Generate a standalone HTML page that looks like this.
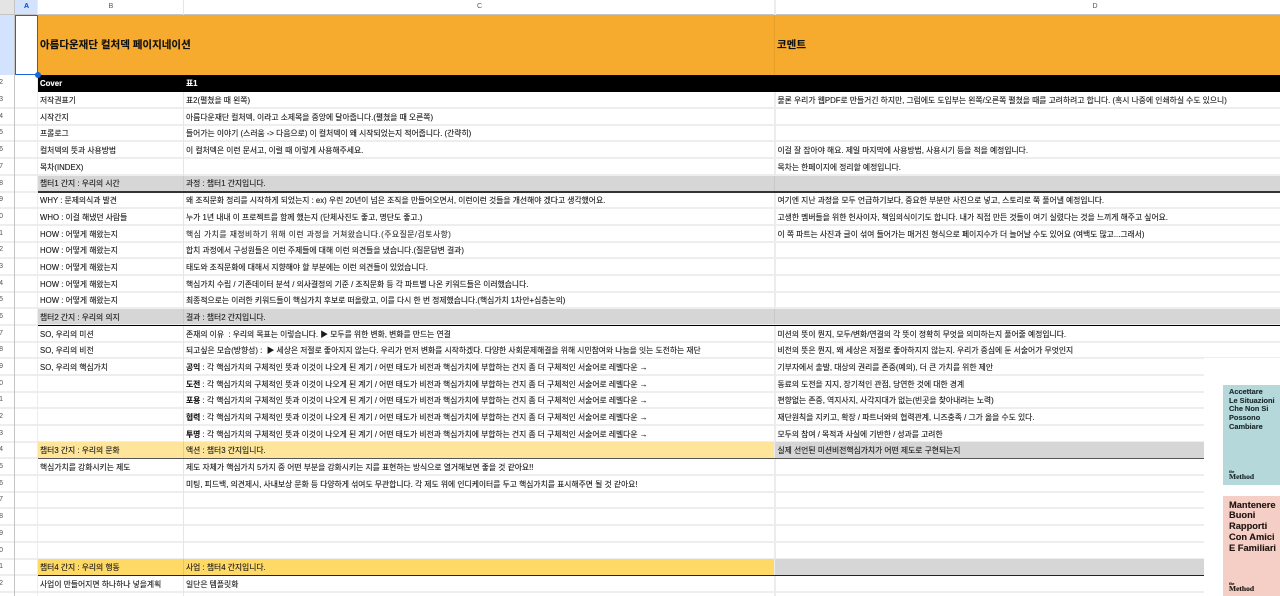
<!DOCTYPE html>
<html lang="ko"><head><meta charset="utf-8"><title>Sheet</title>
<style>
html,body{margin:0;padding:0;background:#fff}
#p{position:relative;width:1280px;height:596px;overflow:hidden;background:#fff;font:7.8px/16px "Liberation Sans","Noto Sans CJK KR",sans-serif;color:#1a1a1a}
.r{position:absolute;left:0;width:1280px;height:17px;box-shadow:inset 0 -2px 0 #eeeeee}
.c{position:absolute;top:0;height:16px;line-height:17px;white-space:nowrap;-webkit-text-stroke:.12px currentColor}
.n{position:absolute;left:0;top:0;width:3px;height:16px;overflow:hidden;direction:rtl;color:#555;font-size:7px}
.b{left:40px}.m{left:186px}.d{left:777.5px}
.v{position:absolute;top:0;width:1px;height:596px}
b{font-weight:700;color:#111}
.bar{position:absolute}
</style></head><body><div id="p">

<div class="bar" style="left:0;top:0;width:1280px;height:14px;background:#fff;border-bottom:1px solid #c4c4c4"></div>
<div class="bar" style="left:0;top:0;width:14px;height:14px;background:#e4e4e4"></div>
<div class="bar" style="left:15px;top:0;width:23px;height:14px;background:#d3e3fd"></div>
<div class="c" style="left:15px;width:23px;top:0;height:14px;line-height:14px;text-align:center;font-size:7px;font-weight:700;color:#0b57d0">A</div>
<div class="c" style="left:38px;width:146px;top:0;height:14px;line-height:14px;text-align:center;font-size:7px;color:#555;-webkit-text-stroke:0">B</div>
<div class="c" style="left:184px;width:591px;top:0;height:14px;line-height:14px;text-align:center;font-size:7px;color:#555;-webkit-text-stroke:0">C</div>
<div class="c" style="left:775px;width:640px;top:0;height:14px;line-height:14px;text-align:center;font-size:7px;color:#555;-webkit-text-stroke:0">D</div>

<div class="r" style="top:92px"><span class="n">3</span><span class="c b">저작권표기</span><span class="c m">표2(펼쳤을 때 왼쪽)</span><span class="c d">물론 우리가 웹PDF로 만들거긴 하지만, 그럼에도 도입부는 왼쪽/오른쪽 펼쳤을 때를 고려하려고 합니다. (혹시 나중에 인쇄하실 수도 있으니)</span></div>
<div class="r" style="top:108.7px"><span class="n">4</span><span class="c b">시작간지</span><span class="c m">아름다운재단 컬처덱, 이라고 소제목을 중앙에 달아줍니다.(펼쳤을 때 오른쪽)</span></div>
<div class="r" style="top:125.4px"><span class="n">5</span><span class="c b">프롤로그</span><span class="c m">들어가는 이야기 (스러움 -&gt; 다음으로) 이 컬처덱이 왜 시작되었는지 적어줍니다. (간략히)</span></div>
<div class="r" style="top:142.1px"><span class="n">6</span><span class="c b">컬처덱의 뜻과 사용방법</span><span class="c m">이 컬처덱은 이런 문서고, 이럴 때 이렇게 사용해주세요.</span><span class="c d">이걸 잘 잡아야 해요. 제일 마지막에 사용방법, 사용시기 등을 적을 예정입니다.</span></div>
<div class="r" style="top:158.8px"><span class="n">7</span><span class="c b">목차(INDEX)</span><span class="c d">목차는 한페이지에 정리할 예정입니다.</span></div>
<div class="r" style="top:175.5px"><span class="n">8</span></div>
<div class="r" style="top:192.1px"><span class="n">9</span><span class="c b">WHY : 문제의식과 발견</span><span class="c m">왜 조직문화 정리를 시작하게 되었는지 : ex) 우린 20년이 넘은 조직을 만들어오면서, 이런이런 것들을 개선해야 겠다고 생각했어요.</span><span class="c d">여기엔 지난 과정을 모두 언급하기보다, 중요한 부분만 사진으로 넣고, 스토리로 쭉 풀어낼 예정입니다.</span></div>
<div class="r" style="top:208.8px"><span class="n">0</span><span class="c b">WHO : 이걸 해냈던 사람들</span><span class="c m">누가 1년 내내 이 프로젝트를 함께 했는지 (단체사진도 좋고, 명단도 좋고.)</span><span class="c d">고생한 멤버들을 위한 헌사이자, 책임의식이기도 합니다. 내가 직접 만든 것들이 여기 실렸다는 것을 느끼게 해주고 싶어요.</span></div>
<div class="r" style="top:225.5px"><span class="n">1</span><span class="c b">HOW : 어떻게 해왔는지</span><span class="c m" style="color:#333;letter-spacing:.5px">핵심 가치를 재정비하기 위해 이런 과정을 거쳐왔습니다.(주요질문/검토사항)</span><span class="c d">이 쪽 파트는 사진과 글이 섞여 들어가는 매거진 형식으로 페이지수가 더 늘어날 수도 있어요 (여백도 많고...그래서)</span></div>
<div class="r" style="top:242.2px"><span class="n">2</span><span class="c b">HOW : 어떻게 해왔는지</span><span class="c m">합치 과정에서 구성원들은 이런 주제들에 대해 이런 의견들을 냈습니다.(질문답변 결과)</span></div>
<div class="r" style="top:258.9px"><span class="n">3</span><span class="c b">HOW : 어떻게 해왔는지</span><span class="c m">태도와 조직문화에 대해서 지향해야 할 부분에는 이런 의견들이 있었습니다.</span></div>
<div class="r" style="top:275.6px"><span class="n">4</span><span class="c b">HOW : 어떻게 해왔는지</span><span class="c m">핵심가치 수립 / 기존데이터 분석 / 의사결정의 기준 / 조직문화 등 각 파트별 나온 키워드들은 이러했습니다.</span></div>
<div class="r" style="top:292.2px"><span class="n">5</span><span class="c b">HOW : 어떻게 해왔는지</span><span class="c m">최종적으로는 이러한 키워드들이 핵심가치 후보로 떠올랐고, 이를 다시 한 번 정제했습니다.(핵심가치 1차안+심층논의)</span></div>
<div class="r" style="top:308.9px"><span class="n">6</span></div>
<div class="r" style="top:325.6px"><span class="n">7</span><span class="c b">SO, 우리의 미션</span><span class="c m">존재의 이유 &nbsp;: 우리의 목표는 이렇습니다. ▶ 모두를 위한 변화, 변화를 만드는 연결</span><span class="c d">미션의 뜻이 뭔지, 모두/변화/연결의 각 뜻이 정확히 무엇을 의미하는지 풀어줄 예정입니다.</span></div>
<div class="r" style="top:342.3px"><span class="n">8</span><span class="c b">SO, 우리의 비전</span><span class="c m">되고싶은 모습(방향성) : &nbsp;▶ 세상은 저절로 좋아지지 않는다. 우리가 먼저 변화를 시작하겠다. 다양한 사회문제해결을 위해 시민참여와 나눔을 잇는 도전하는 재단</span><span class="c d">비전의 뜻은 뭔지, 왜 세상은 저절로 좋아하지지 않는지. 우리가 중심에 둔 서술어가 무엇인지</span></div>
<div class="r" style="top:359px"><span class="n">9</span><span class="c b">SO, 우리의 핵심가치</span><span class="c m"><b>공익</b> : 각 핵심가치의 구체적인 뜻과 이것이 나오게 된 계기 / 어떤 태도가 비전과 핵심가치에 부합하는 건지 좀 더 구체적인 서술어로 레벨다운 →</span><span class="c d">기부자에서 출발, 대상의 권리를 존중(예의), 더 큰 가치를 위한 제안</span></div>
<div class="r" style="top:375.7px"><span class="n">0</span><span class="c m"><b>도전</b> : 각 핵심가치의 구체적인 뜻과 이것이 나오게 된 계기 / 어떤 태도가 비전과 핵심가치에 부합하는 건지 좀 더 구체적인 서술어로 레벨다운 →</span><span class="c d">동료의 도전을 지지, 장기적인 관점, 당연한 것에 대한 경계</span></div>
<div class="r" style="top:392.3px"><span class="n">1</span><span class="c m"><b>포용</b> : 각 핵심가치의 구체적인 뜻과 이것이 나오게 된 계기 / 어떤 태도가 비전과 핵심가치에 부합하는 건지 좀 더 구체적인 서술어로 레벨다운 →</span><span class="c d">편향없는 존중, 역지사지, 사각지대가 없는(빈곳을 찾아내려는 노력)</span></div>
<div class="r" style="top:409px"><span class="n">2</span><span class="c m"><b>협력</b> : 각 핵심가치의 구체적인 뜻과 이것이 나오게 된 계기 / 어떤 태도가 비전과 핵심가치에 부합하는 건지 좀 더 구체적인 서술어로 레벨다운 →</span><span class="c d">재단원칙을 지키고, 확장 / 파트너와의 협력관계, 니즈충족 / 그가 옳을 수도 있다.</span></div>
<div class="r" style="top:425.7px"><span class="n">3</span><span class="c m"><b>투명</b> : 각 핵심가치의 구체적인 뜻과 이것이 나오게 된 계기 / 어떤 태도가 비전과 핵심가치에 부합하는 건지 좀 더 구체적인 서술어로 레벨다운 →</span><span class="c d">모두의 참여 / 목적과 사실에 기반한 / 성과를 고려한</span></div>
<div class="r" style="top:442.4px"><span class="n">4</span></div>
<div class="r" style="top:459.1px"><span class="n">5</span><span class="c b">핵심가치를 강화시키는 제도</span><span class="c m">제도 자체가 핵심가치 5가지 중 어떤 부분을 강화시키는 지를 표현하는 방식으로 열거해보면 좋을 것 같아요!!</span></div>
<div class="r" style="top:475.8px"><span class="n">6</span><span class="c m">미팅, 피드백, 의견제시, 사내보상 문화 등 다양하게 섞여도 무관합니다. 각 제도 위에 인디케이터를 두고 핵심가치를 표시해주면 될 것 같아요!</span></div>
<div class="r" style="top:492.4px"><span class="n">7</span></div>
<div class="r" style="top:509.1px"><span class="n">8</span></div>
<div class="r" style="top:525.8px"><span class="n">9</span></div>
<div class="r" style="top:542.5px"><span class="n">0</span></div>
<div class="r" style="top:559.2px"><span class="n">1</span></div>
<div class="r" style="top:575.9px"><span class="n">2</span><span class="c b">사업이 만들어지면 하나하나 넣을계획</span><span class="c m">일단은 템플릿화</span></div>

<div class="v" style="left:14px;background:#c4c4c4"></div>
<div class="v" style="left:37px;background:#ececec"></div>
<div class="v" style="left:183px;background:#e6e6e6"></div>
<div class="v" style="left:774px;width:2px;background:#ececec"></div>

<!-- row 1 -->
<div class="bar" style="left:0;top:15px;width:14px;height:60px;background:#d3e3fd"></div>
<div class="bar" style="left:38px;top:15px;width:1242px;height:60px;background:#f6ab2e"></div>
<div class="bar" style="left:774px;top:15px;width:1px;height:60px;background:#e6a02a"></div>
<div class="c" style="left:40px;top:37px;font-size:10.5px;font-weight:700;color:#111">아름다운재단 컬처덱 페이지네이션</div>
<div class="c" style="left:777px;top:37px;font-size:10.5px;font-weight:700;color:#111">코멘트</div>
<div class="bar" style="left:15px;top:15px;width:21px;height:58px;border:1.5px solid #1a66d6"></div>
<!-- row 2 -->
<div class="bar" style="left:38px;top:75px;width:1242px;height:17px;background:#000"></div>
<div class="n" style="top:75px">2</div>
<div class="c" style="left:40px;top:75px;color:#fff;font-weight:700">Cover</div>
<div class="c" style="left:186px;top:75px;color:#fff;font-weight:700">표1</div>
<div class="bar" style="left:35px;top:72px;width:6px;height:6px;border-radius:50%;background:#1a66d6"></div>

<!-- section rows -->
<div class="bar" style="left:38px;top:175.5px;width:1242px;height:15.5px;background:#d6d6d6"></div>
<div class="bar" style="left:183px;top:175.5px;width:1px;height:15.5px;background:#c8c8c8"></div>
<div class="bar" style="left:774px;top:175.5px;width:1px;height:15.5px;background:#c8c8c8"></div>
<div class="bar" style="left:38px;top:191px;width:1242px;height:1.5px;background:#333"></div>
<div class="c b" style="top:175px">챕터1 간지 : 우리의 시간</div>
<div class="c m" style="top:175px">과정 : 챕터1 간지입니다.</div>

<div class="bar" style="left:38px;top:308.9px;width:1242px;height:15.6px;background:#d6d6d6"></div>
<div class="bar" style="left:183px;top:308.9px;width:1px;height:15.6px;background:#c8c8c8"></div>
<div class="bar" style="left:774px;top:308.9px;width:1px;height:15.6px;background:#c8c8c8"></div>
<div class="bar" style="left:38px;top:324.7px;width:1242px;height:1px;background:#000"></div>
<div class="c b" style="top:308.9px">챕터2 간지 : 우리의 의지</div>
<div class="c m" style="top:308.9px">결과 : 챕터2 간지입니다.</div>

<div class="bar" style="left:38px;top:442.4px;width:736px;height:16px;background:#ffe599"></div>
<div class="bar" style="left:183px;top:442.4px;width:1px;height:16px;background:#e8cf86"></div>
<div class="bar" style="left:775px;top:442.4px;width:429px;height:16px;background:#d6d6d6"></div>
<div class="bar" style="left:38px;top:458.4px;width:1166px;height:1px;background:#555"></div>
<div class="c b" style="top:442.4px">챕터3 간지 : 우리의 문화</div>
<div class="c m" style="top:442.4px">액션 : 챕터3 간지입니다.</div>
<div class="c d" style="top:442.4px">실제 선언된 미션비전핵심가치가 어떤 제도로 구현되는지</div>

<div class="bar" style="left:38px;top:559.2px;width:736px;height:16px;background:#ffd966"></div>
<div class="bar" style="left:183px;top:559.2px;width:1px;height:16px;background:#e8c55c"></div>
<div class="bar" style="left:775px;top:559.2px;width:429px;height:16px;background:#d6d6d6"></div>
<div class="bar" style="left:38px;top:575px;width:1166px;height:1px;background:#222"></div>
<div class="c b" style="top:559.2px">챕터4 간지 : 우리의 행동</div>
<div class="c m" style="top:559.2px">사업 : 챕터4 간지입니다.</div>

<!-- overlay image -->
<div class="bar" style="left:1204px;top:358px;width:76px;height:238px;background:#fff"></div>
<div class="bar" style="left:1223px;top:385px;width:57px;height:100px;background:#b5d9db"></div>
<div class="c" style="left:1229px;top:388px;height:auto;font:700 7.4px/8.7px 'Liberation Sans',sans-serif;color:#1c2a2c">Accettare<br>Le Situazioni<br>Che Non Si<br>Possono<br>Cambiare</div>
<div class="c" style="left:1229px;top:470px;height:auto;font:700 7.5px/8px 'Liberation Serif',serif;color:#1c2a2c"><span style="font-size:4px;display:block;line-height:3px">the</span>Method</div>
<div class="bar" style="left:1223px;top:496px;width:57px;height:100px;background:#f5cfc5"></div>
<div class="c" style="left:1229px;top:499.5px;height:auto;font:700 9.3px/10.9px 'Liberation Sans',sans-serif;color:#1d1512">Mantenere<br>Buoni<br>Rapporti<br>Con Amici<br>E Familiari</div>
<div class="c" style="left:1229px;top:582px;height:auto;font:700 7.5px/8px 'Liberation Serif',serif;color:#1d1512"><span style="font-size:4px;display:block;line-height:3px">the</span>Method</div>
</div></body></html>
